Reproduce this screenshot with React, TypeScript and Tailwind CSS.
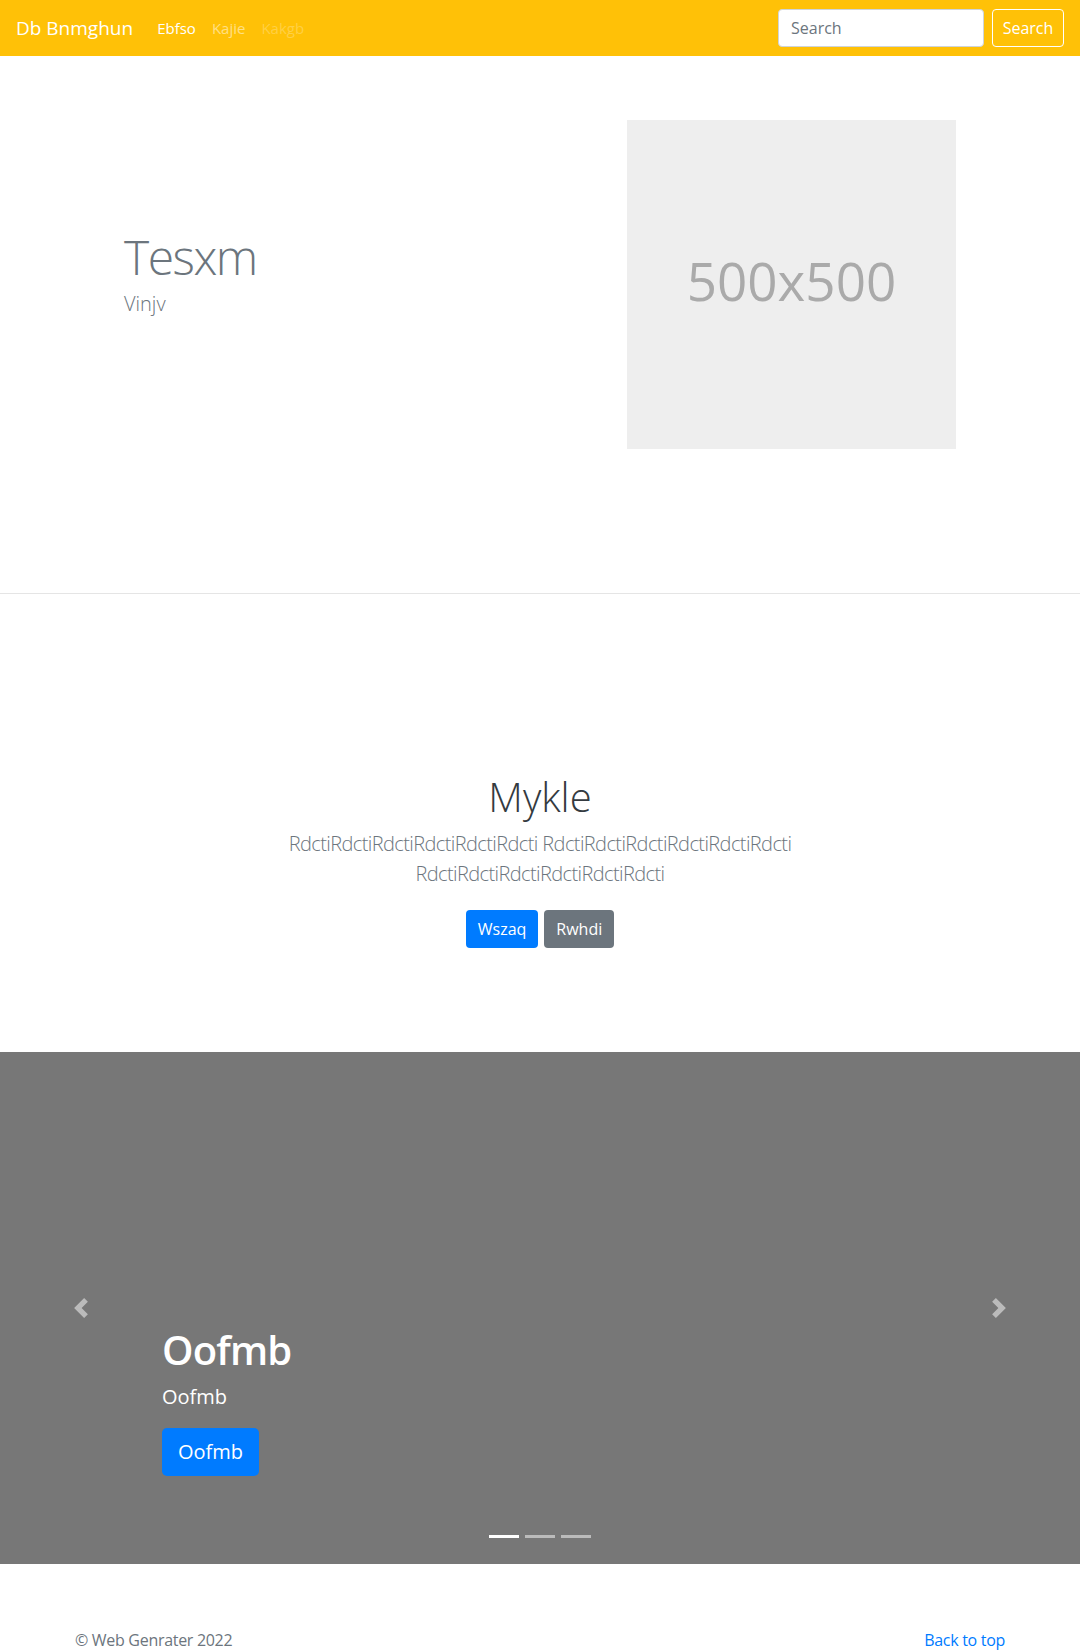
import React from "react";

const font = { fontFamily: '"Open Sans", "Noto Sans", sans-serif' };

const Navbar = () => (
  <nav className="flex items-center justify-between bg-[#ffc107] h-[56px] px-4">
    <div className="flex items-center">
      <a className="text-white text-[19px] leading-[30px] mr-4">Db Bnmghun</a>
      <div className="flex items-center text-[15px]">
        <a className="px-2 text-white">Ebfso</a>
        <a className="px-2 text-white/50">Kajie</a>
        <a className="px-2 text-white/25">Kakgb</a>
      </div>
    </div>
    <form className="flex items-center gap-2">
      <input
        type="text"
        placeholder="Search"
        className="w-[206px] h-[38px] rounded border border-[#ced4da] bg-white px-3 text-[16px] text-[#495057] placeholder:text-[#6c757d] outline-none"
      />
      <button className="h-[38px] w-[72px] rounded border border-white text-white text-[16px]">
        Search
      </button>
    </form>
  </nav>
);

const Hero = () => (
  <section className="border-b border-[#e5e5e5] pt-[64px] pb-[144px]">
    <div className="mx-auto w-[960px] px-[15px] flex items-center">
      <div className="w-[465px] pl-[49px] pb-[22px]">
        <h1 className="text-[48px] leading-[1.2] font-light text-[#6c757d] tracking-[-1.5px] mb-[3px]">Tesxm</h1>
        <p className="text-[20px] font-light text-[#6c757d] leading-[30px]">Vinjv</p>
      </div>
      <div className="ml-[87px] w-[329px] h-[329px] bg-[#eeeeee] flex items-center justify-center">
        <span className="text-[#aaaaaa] text-[53px] leading-none pb-[8px]">500x500</span>
      </div>
    </div>
  </section>
);

const Intro = () => (
  <section className="text-center pt-[179px] pb-[104px]">
    <div className="mx-auto max-w-[600px]">
      <h1 className="text-[40px] leading-[48px] font-light text-[#343a40] mb-2">Mykle</h1>
      <p className="text-[20px] leading-[30px] font-light text-[#6c757d] tracking-[-0.6px] mb-[21px]">
        RdctiRdctiRdctiRdctiRdctiRdcti RdctiRdctiRdctiRdctiRdctiRdcti RdctiRdctiRdctiRdctiRdctiRdcti
      </p>
      <div className="flex justify-center gap-[6px]">
        <a className="h-[38px] px-3 rounded bg-[#007bff] text-white text-[16px] flex items-center">Wszaq</a>
        <a className="h-[38px] px-3 rounded bg-[#6c757d] text-white text-[16px] flex items-center">Rwhdi</a>
      </div>
    </div>
  </section>
);

const Carousel = () => (
  <section className="relative bg-[#777777] h-[512px] flex items-end px-[162px] pb-[88px]">
    <div className="text-white">
      <h1 className="text-[40px] leading-[48px] font-semibold tracking-[-0.8px] mb-2">Oofmb</h1>
      <p className="text-[20px] leading-[30px] mb-[16px]">Oofmb</p>
      <a className="inline-flex items-center h-[48px] px-4 rounded-[5px] bg-[#007bff] text-white text-[20px]">Oofmb</a>
    </div>
    <svg className="absolute left-[71px] top-[246px] w-[20px] h-[20px] opacity-50" viewBox="0 0 8 8" fill="#fff">
      <path d="M5.25 0l-4 4 4 4 1.5-1.5L4.25 4l2.5-2.5L5.25 0z" />
    </svg>
    <svg className="absolute right-[71px] top-[246px] w-[20px] h-[20px] opacity-50" viewBox="0 0 8 8" fill="#fff">
      <path d="M2.75 0l-1.5 1.5L3.75 4l-2.5 2.5L2.75 8l4-4-4-4z" />
    </svg>
    <div className="absolute bottom-[26px] left-0 right-0 flex justify-center gap-[6px]">
      <span className="w-[30px] h-[3px] bg-white" />
      <span className="w-[30px] h-[3px] bg-white/50" />
      <span className="w-[30px] h-[3px] bg-white/50" />
    </div>
  </section>
);

const Footer = () => (
  <footer className="pt-[64px] pb-[48px]">
    <div className="mx-auto w-[960px] px-[15px] flex justify-between text-[16px] leading-[24px] tracking-[-0.3px]">
      <p className="text-[#6c757d]">© Web Genrater 2022</p>
      <a className="text-[#007bff]">Back to top</a>
    </div>
  </footer>
);

export default function App() {
  return (
    <div style={font} className="bg-white text-[#212529]">
      <Navbar />
      <Hero />
      <Intro />
      <Carousel />
      <Footer />
    </div>
  );
}
